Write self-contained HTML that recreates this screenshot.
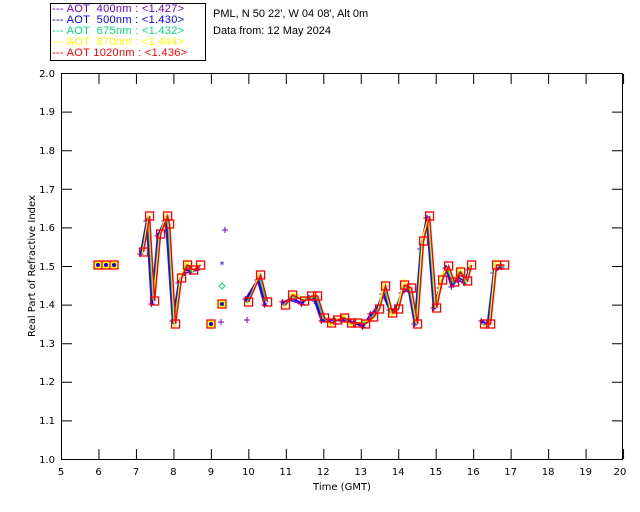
<!DOCTYPE html>
<html><head><meta charset="utf-8"><style>
html,body{margin:0;padding:0;background:#fff;width:640px;height:512px;overflow:hidden}
svg{display:block}
text{font-family:"DejaVu Sans","Liberation Sans",sans-serif;font-size:10px}
.lg{font-family:"Liberation Sans",sans-serif;font-size:11px;letter-spacing:0.3px}
.hd{font-family:"Liberation Sans",sans-serif;font-size:11px}
</style></head><body>
<svg id="s" width="640" height="512" xmlns="http://www.w3.org/2000/svg">
<rect x="50.5" y="3.5" width="155" height="57" fill="#fff" stroke="#000"/>
<g>
<text class="lg" x="52" y="12" fill="#7000c0" xml:space="preserve">--- AOT  400nm : &lt;1.427&gt;</text>
<text class="lg" x="52" y="23" fill="#0000ff" xml:space="preserve">--- AOT  500nm : &lt;1.430&gt;</text>
<text class="lg" x="52" y="34" fill="#00e070" xml:space="preserve">--- AOT  675nm : &lt;1.432&gt;</text>
<text class="lg" x="52" y="45" fill="#ffff00" xml:space="preserve">--- AOT  870nm : &lt;1.444&gt;</text>
<text class="lg" x="52" y="56" fill="#ff0000" xml:space="preserve">--- AOT 1020nm : &lt;1.436&gt;</text>
</g>
<text class="hd" x="213" y="17">PML, N 50 22', W 04 08', Alt 0m</text>
<text class="hd" x="213" y="34">Data from: 12 May 2024</text>
<rect x="61.5" y="73.5" width="561" height="386" fill="none" stroke="#000"/>
<g id="ticks" stroke="#000"></g>
<g text-anchor="end">
<text x="55" y="77">2.0</text><text x="55" y="115">1.9</text><text x="55" y="154">1.8</text>
<text x="55" y="193">1.7</text><text x="55" y="231">1.6</text><text x="55" y="270">1.5</text>
<text x="55" y="308">1.4</text><text x="55" y="347">1.3</text><text x="55" y="385">1.2</text>
<text x="55" y="424">1.1</text><text x="55" y="463">1.0</text>
</g>
<g text-anchor="middle">
<text x="61" y="475">5</text><text x="98.5" y="475">6</text><text x="136" y="475">7</text>
<text x="173.4" y="475">8</text><text x="210.9" y="475">9</text><text x="248.4" y="475">10</text>
<text x="285.8" y="475">11</text><text x="323.3" y="475">12</text><text x="360.8" y="475">13</text>
<text x="398.2" y="475">14</text><text x="435.7" y="475">15</text><text x="473.2" y="475">16</text>
<text x="510.6" y="475">17</text><text x="548.1" y="475">18</text><text x="585.6" y="475">19</text>
<text x="620" y="475">20</text>
<text x="342" y="490">Time (GMT)</text>
</g>
<text x="0" y="0" transform="translate(35,266) rotate(-90)" text-anchor="middle">Real Part of Refractive Index</text>
<g id="data"></g>
</svg>
<script>
var t=document.getElementById('ticks'),p='';
for(var k=0;k<=15;k++){var x=61.5+37.47*k;p+='M'+x+' 74V84M'+x+' 459V449';}
for(var k=0;k<=10;k++){var y=459.5-38.6*k;p+='M62 '+y+'H72M622 '+y+'H612';}
t.innerHTML='<path fill="none" d="'+p+'"/>';
var segs=[
[[142,252],[148,216],[153,301],[159,234],[166,216],[168,224],[174,324],[180,278],[186,265],[192,270],[199,265]],
[[247,302],[259,275],[266,302]],
[[284,305],[291,295],[303,301],[310,296],[316,296],[323,318],[330,323],[336,320],[343,318],[350,323],[356,323],[364,324],[372,317],[378,309],[384,286],[391,313],[397,309],[403,285],[410,288],[416,324],[422,241],[428,216],[435,308],[441,280],[447,266],[453,282],[459,272],[466,281],[470,265]],
[[483,324],[489,324],[495,265],[503,265]]];
var singles=[[98,265],[106,265],[114,265],[211,324],[222,304]];
var cols=[['#7000c0',3,5],['#0000ff',2,3],['#00e070',-1,1],['#ffff00',-3,-2],['#ff0000',0,0]];
var h='';
cols.forEach(function(c,ci){
 segs.forEach(function(s){
  var pts=s.map(function(q,i){var j=(ci<4)?((i%3)-1)*c[1]:0;return [q[0]+(ci-2)*0.8,q[1]+j+(ci<4&&q[1]<300?c[2]:0)];});
  h+='<polyline fill="none" stroke="'+c[0]+'" stroke-width="1.5" points="'+pts.map(function(a){return a.join(',')}).join(' ')+'"/>';
  pts.forEach(function(a){
   if(ci==4)h+='<rect x="'+(a[0]-4)+'" y="'+(a[1]-4)+'" width="8" height="8" fill="none" stroke="#f00" stroke-width="1.3"/>';
   else if(ci==1)h+='<text x="'+a[0]+'" y="'+(a[1]+5)+'" fill="#00f" font-size="13" text-anchor="middle">*</text>';
   else if(ci==0)h+='<path d="M'+(a[0]-3)+' '+a[1]+'h6M'+a[0]+' '+(a[1]-3)+'v6" stroke="#7000c0"/>';
  });
 });
});
singles.forEach(function(a){h+='<rect x="'+(a[0]-4)+'" y="'+(a[1]-4)+'" width="8" height="8" fill="#ffff00" stroke="#f00" stroke-width="1.3"/><circle cx="'+a[0]+'" cy="'+a[1]+'" r="2" fill="#00f"/>';});
h+='<path d="M222 230h6M225 227v6M244 320h6M247 317v6M218 322h6M221 319v6" stroke="#7000c0"/>';
h+='<text x="222" y="268" fill="#00f" font-size="13" text-anchor="middle">*</text>';
h+='<path d="M222 283l3 3-3 3-3-3z" fill="none" stroke="#00e070"/>';
document.getElementById('data').innerHTML=h;
</script>
</body></html>
